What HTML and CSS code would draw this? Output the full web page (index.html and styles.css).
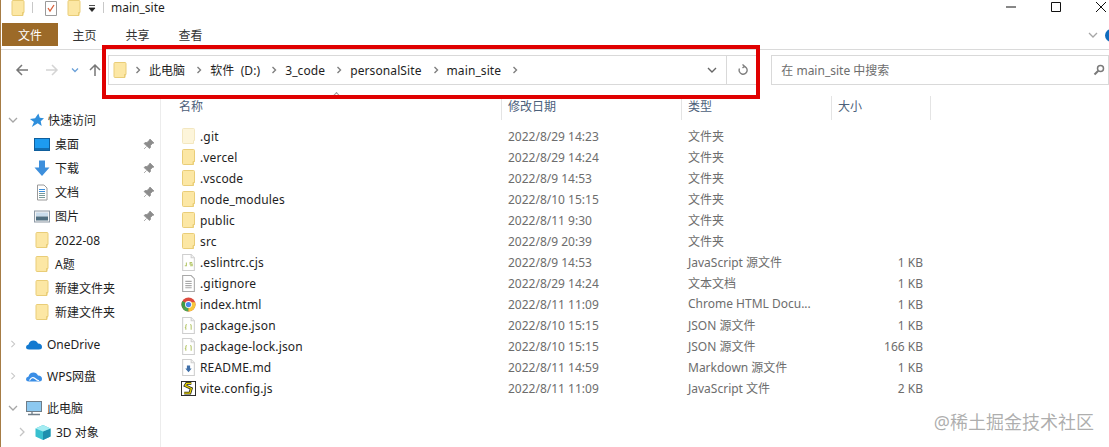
FILE: index.html
```html
<!DOCTYPE html>
<html lang="zh-CN">
<head>
<meta charset="utf-8">
<title>main_site</title>
<link rel="stylesheet" href="styles.css">
</head>
<body>
<svg class="defs" width="0" height="0" aria-hidden="true">
  <symbol id="folder" viewBox="0 0 14 17"><path d="M1 1.5Q1 .5 2 .5H12Q13 .5 13 1.500V12.500H12V15.500H2Q1 15.500 1 14.500Z" fill="#fce7a4" stroke="#e9cd78"/><path d="M11.500 15.500V12.500H13" fill="#f6d877" stroke="#e9cd78"/></symbol>
  <symbol id="folderpale" viewBox="0 0 14 17"><path d="M1 1.500Q1 .5 2 .5H12Q13 .5 13 1.500V12.500H12V15.500H2Q1 15.500 1 14.500Z" fill="#fdf5da" stroke="#f3e7c0"/></symbol>
  <symbol id="pin" viewBox="0 0 12 12"><path d="M7 1l4 4-1.500.5-2 2 0 2-1 1L1 5.500l1-1h2l2-2z M3.500 8.500L1 11" fill="#8c8c8c" stroke="#8c8c8c" stroke-width=".7"/></symbol>
  <symbol id="doc" viewBox="0 0 14 16"><path d="M1.500.5H9.500L12.500 3.500V15.500H1.500Z" fill="#fff" stroke="#cfcfcf"/><path d="M9.500.5V3.500H12.500" fill="#f2f2f2" stroke="#cfcfcf"/></symbol>
  <symbol id="chev-r" viewBox="0 0 8 10"><path d="M2 1l4 4-4 4" fill="none" stroke="#c4c4c4" stroke-width="1.300"/></symbol>
  <symbol id="chev-d" viewBox="0 0 10 8"><path d="M1 2l4 4 4-4" fill="none" stroke="#a6a6a6" stroke-width="1.300"/></symbol>
  <symbol id="crumb" viewBox="0 0 6 8"><path d="M1.500 1l3 3-3 3" fill="none" stroke="#7f7f7f" stroke-width="1.400"/></symbol>
</svg>

<div class="app">
  <header class="titlebar">
    <div class="qat">
      <svg class="qat-folder"><use href="#folder"/></svg>
      <span class="qat-sep"></span>
      <svg class="qat-note" viewBox="0 0 14 17"><path d="M1.500 1.500H12.500V15.500H1.500Z" fill="#fff" stroke="#9a9a9a"/><path d="M4 8l2 3 4-6" fill="none" stroke="#d9603a" stroke-width="1.300"/></svg>
      <svg class="qat-folder"><use href="#folder"/></svg>
      <svg class="qat-arrow" viewBox="0 0 10 10"><path d="M2 2.500H8M2 5H8L5 8.500Z" fill="#222" stroke="#222" stroke-width=".8"/></svg>
      <span class="qat-sep"></span>
      <span class="title-text">main_site</span>
    </div>
    <div class="winctl">
      <svg viewBox="0 0 12 12"><path d="M1 6H11" stroke="#111" fill="none"/></svg>
      <svg viewBox="0 0 12 12"><path d="M1.500 1.500H10.500V10.500H1.500Z" stroke="#111" fill="none"/></svg>
      <svg viewBox="0 0 12 12"><path d="M1 1L11 11M11 1L1 11" stroke="#111" fill="none"/></svg>
    </div>
  </header>

  <nav class="tabs">
    <span class="tab tab-file">文件</span>
    <span class="tab">主页</span>
    <span class="tab">共享</span>
    <span class="tab">查看</span>
    <span class="tabs-end">
      <svg class="ribbon-chev"><use href="#chev-d"/></svg>
      <span class="help"></span>
    </span>
  </nav>

  <section class="addr-row">
    <div class="navs">
      <svg class="nav-back" viewBox="0 0 14 14"><path d="M13 7H2M7 2L2 7l5 5" fill="none" stroke="#777" stroke-width="1.500"/></svg>
      <svg class="nav-fwd" viewBox="0 0 14 14"><path d="M1 7H12M7 2l5 5-5 5" fill="none" stroke="#d4d4d4" stroke-width="1.500"/></svg>
      <svg class="nav-drop" viewBox="0 0 8 6"><path d="M1 1.500l3 3 3-3" fill="none" stroke="#6aa0d8" stroke-width="1.300"/></svg>
      <svg class="nav-up" viewBox="0 0 14 14"><path d="M7 13V2M2 7l5-5 5 5" fill="none" stroke="#777" stroke-width="1.500"/></svg>
    </div>
    <div class="addr-box">
      <svg class="addr-folder"><use href="#folder"/></svg>
      <svg class="crumb"><use href="#crumb"/></svg><span class="crumb-text">此电脑</span>
      <svg class="crumb"><use href="#crumb"/></svg><span class="crumb-text">软件 (D:)</span>
      <svg class="crumb"><use href="#crumb"/></svg><span class="crumb-text">3_code</span>
      <svg class="crumb"><use href="#crumb"/></svg><span class="crumb-text">personalSite</span>
      <svg class="crumb"><use href="#crumb"/></svg><span class="crumb-text">main_site</span>
      <svg class="crumb"><use href="#crumb"/></svg>
      <svg class="addr-drop" viewBox="0 0 10 8"><path d="M1 2l4 4 4-4" fill="none" stroke="#666" stroke-width="1.400"/></svg>
      <span class="addr-refresh">
        <svg viewBox="0 0 12 12"><path d="M6.500 2.200A4 4 0 1 1 2.500 4.500M5.500.5L7.500 2.200 5.500 4" fill="none" stroke="#808080" stroke-width="1.400"/></svg>
      </span>
    </div>
    <div class="search-box">
      <span class="search-text">在 main_site 中搜索</span>
      <svg viewBox="0 0 12 12"><circle cx="7.500" cy="4.500" r="3" fill="none" stroke="#7a7a7a" stroke-width="1.500"/><path d="M5.300 6.700L1.500 10.500" stroke="#7a7a7a" stroke-width="2"/></svg>
    </div>
  </section>

  <main class="body">
    <aside class="sidebar">
      <div class="tree-group">
        <div class="tree-row lvl1"><svg class="tw"><use href="#chev-d"/></svg>
          <svg class="tree-ic star" viewBox="0 0 16 16"><path d="M10 .5l1.500 4.500 4.500.5-3.500 3.300 1 5-4.200-2.800L3 15l2.300-5.500L1 6.500l5.500-1z" fill="#2f8fdc"/></svg><span>快速访问</span></div>
        <div class="tree-row lvl2"><svg class="tree-ic" viewBox="0 0 16 16"><rect x=".5" y="2" width="15" height="12" fill="#1d9bf0" stroke="#0f5e9c"/><path d="M1 12.500H15" stroke="#0f5e9c" stroke-width="1.500"/></svg><span class="grow">桌面</span><svg class="pin"><use href="#pin"/></svg></div>
        <div class="tree-row lvl2"><svg class="tree-ic" viewBox="0 0 16 16"><path d="M5 0H11V7H15.500L8 15.500.5 7H5Z" fill="#3d8fdc"/></svg><span class="grow">下载</span><svg class="pin"><use href="#pin"/></svg></div>
        <div class="tree-row lvl2"><svg class="tree-ic" viewBox="0 0 16 16"><path d="M3.500.5H10L13 3.500V15.500H3.500Z" fill="#fff" stroke="#9a9a9a"/><path d="M5 5H11M5 7H11" stroke="#3d8fdc"/><path d="M5 9H11M5 11H11M5 13H11" stroke="#7a9a9a"/></svg><span class="grow">文档</span><svg class="pin"><use href="#pin"/></svg></div>
        <div class="tree-row lvl2"><svg class="tree-ic" viewBox="0 0 16 16"><rect x=".5" y="2.500" width="15" height="11" fill="#f4f4f4" stroke="#8e9aa6"/><rect x="2" y="4" width="12" height="4" fill="#c9dcec"/><rect x="2" y="8" width="12" height="4" fill="#4f6e80"/></svg><span class="grow">图片</span><svg class="pin"><use href="#pin"/></svg></div>
        <div class="tree-row lvl2"><svg class="tree-ic"><use href="#folder"/></svg><span class="num">2022-08</span></div>
        <div class="tree-row lvl2"><svg class="tree-ic"><use href="#folder"/></svg><span>A题</span></div>
        <div class="tree-row lvl2"><svg class="tree-ic"><use href="#folder"/></svg><span>新建文件夹</span></div>
        <div class="tree-row lvl2"><svg class="tree-ic"><use href="#folder"/></svg><span>新建文件夹</span></div>
      </div>
      <div class="tree-group">
        <div class="tree-row lvl1"><svg class="tw"><use href="#chev-r"/></svg>
          <svg class="tree-ic wide" viewBox="0 0 16 12"><path d="M3 11Q0 11 0 8.500 0 6.500 2.500 6 3.500 2 7.500 2 10.500 2 12 5 16 5 16 8.500 16 11 13 11Z" fill="#1279d0"/></svg><span>OneDrive</span></div>
      </div>
      <div class="tree-group">
        <div class="tree-row lvl1"><svg class="tw"><use href="#chev-r"/></svg>
          <svg class="tree-ic wide" viewBox="0 0 16 12"><path d="M3 11Q0 11 0 8.500 0 6.500 2.500 6 3.500 2 7.500 2 10.500 2 12 5 16 5 16 8.500 16 11 13 11Z" fill="#3a8ee6"/><path d="M3.500 10Q6 5.500 9 8T13 10" fill="none" stroke="#fff" stroke-width="1.100"/></svg><span>WPS网盘</span></div>
      </div>
      <div class="tree-group">
        <div class="tree-row lvl1"><svg class="tw"><use href="#chev-d"/></svg>
          <svg class="tree-ic wide" viewBox="0 0 16 16"><rect x=".5" y="1" width="15" height="10" fill="#8cc8f0" stroke="#6f7d88"/><path d="M6 11.500V13.500M2 14H14" stroke="#6f7d88" stroke-width="1.300"/></svg><span>此电脑</span></div>
        <div class="tree-row lvl2 last"><svg class="tw tw2"><use href="#chev-r"/></svg><svg class="tree-ic" viewBox="0 0 16 16"><path d="M8 .5L15.500 4V12L8 15.500.5 12V4Z" fill="#38c0cf"/><path d="M8 7L15.500 4V12L8 15.500Z" fill="#1e8fae"/><path d="M8 .5L15.500 4 8 7 .5 4Z" fill="#a5ecf2"/></svg><span>3D 对象</span></div>
      </div>
    </aside>

    <section class="files">
      <div class="col-head">
        <span class="sort-caret"></span>
        <span class="hc hc-name">名称</span>
        <span class="hc hc-date">修改日期</span>
        <span class="hc hc-type">类型</span>
        <span class="hc hc-size">大小</span>
      </div>
      <div class="rows">
        <div class="row"><span class="c-name"><svg class="fi"><use href="#folderpale"/></svg>.git</span><span class="c-date">2022/8/29 14:23</span><span class="c-type">文件夹</span><span class="c-size"></span></div>
        <div class="row"><span class="c-name"><svg class="fi"><use href="#folder"/></svg>.vercel</span><span class="c-date">2022/8/29 14:24</span><span class="c-type">文件夹</span><span class="c-size"></span></div>
        <div class="row"><span class="c-name"><svg class="fi"><use href="#folder"/></svg>.vscode</span><span class="c-date">2022/8/9 14:53</span><span class="c-type">文件夹</span><span class="c-size"></span></div>
        <div class="row"><span class="c-name"><svg class="fi"><use href="#folder"/></svg>node_modules</span><span class="c-date">2022/8/10 15:15</span><span class="c-type">文件夹</span><span class="c-size"></span></div>
        <div class="row"><span class="c-name"><svg class="fi"><use href="#folder"/></svg>public</span><span class="c-date">2022/8/11 9:30</span><span class="c-type">文件夹</span><span class="c-size"></span></div>
        <div class="row"><span class="c-name"><svg class="fi"><use href="#folder"/></svg>src</span><span class="c-date">2022/8/9 20:39</span><span class="c-type">文件夹</span><span class="c-size"></span></div>
        <div class="row"><span class="c-name"><svg class="fi" viewBox="0 0 14 16"><use href="#doc"/><path d="M5 8V11H3.500M10.500 8H8.500V9.500H10.500V11H8.500" fill="none" stroke="#b5c76a"/></svg>.eslintrc.cjs</span><span class="c-date">2022/8/9 14:53</span><span class="c-type">JavaScript 源文件</span><span class="c-size">1 KB</span></div>
        <div class="row"><span class="c-name"><svg class="fi" viewBox="0 0 14 16"><path d="M1.500.5H9.500L12.500 3.500V15.500H1.500Z" fill="#fff" stroke="#a8a8a8"/><path d="M4 6H10M4 8H10M4 10H10M4 12H10" stroke="#a8a8a8"/></svg>.gitignore</span><span class="c-date">2022/8/29 14:24</span><span class="c-type">文本文档</span><span class="c-size">1 KB</span></div>
        <div class="row"><span class="c-name"><svg class="fi" viewBox="0 0 16 16"><circle cx="8" cy="8" r="7.500" fill="#dd4b3e"/><path d="M8 8L1.500 11.700A7.500 7.500 0 0 0 8 15.500Z" fill="#4aa54f"/><path d="M8 8V15.500A7.500 7.500 0 0 0 15 5.500H8Z" fill="#f6c73b"/><path d="M8 8L1.500 11.700A7.500 7.500 0 0 1 1.500 4.300Z" fill="#3f9c46"/><circle cx="8" cy="8" r="3.700" fill="#fff"/><circle cx="8" cy="8" r="2.800" fill="#4a85e8"/></svg>index.html</span><span class="c-date">2022/8/11 11:09</span><span class="c-type">Chrome HTML Docu...</span><span class="c-size">1 KB</span></div>
        <div class="row"><span class="c-name"><svg class="fi" viewBox="0 0 14 16"><use href="#doc"/><path d="M5.500 7Q4.500 7 4.500 8V9.500L4 10 4.500 10.500V12M8.500 7Q9.500 7 9.500 8V12" fill="none" stroke="#b5c76a"/></svg>package.json</span><span class="c-date">2022/8/10 15:15</span><span class="c-type">JSON 源文件</span><span class="c-size">1 KB</span></div>
        <div class="row"><span class="c-name"><svg class="fi" viewBox="0 0 14 16"><use href="#doc"/><path d="M5.500 7Q4.500 7 4.500 8V9.500L4 10 4.500 10.500V12M8.500 7Q9.500 7 9.500 8V12" fill="none" stroke="#b5c76a"/></svg>package-lock.json</span><span class="c-date">2022/8/10 15:15</span><span class="c-type">JSON 源文件</span><span class="c-size">166 KB</span></div>
        <div class="row"><span class="c-name"><svg class="fi" viewBox="0 0 14 16"><use href="#doc"/><path d="M5.500 6H8.500V9H10L7 12.500 4 9H5.500Z" fill="#3f6fa8"/></svg>README.md</span><span class="c-date">2022/8/11 14:59</span><span class="c-type">Markdown 源文件</span><span class="c-size">1 KB</span></div>
        <div class="row"><span class="c-name"><svg class="fi" viewBox="0 0 16 16"><rect x=".5" y=".5" width="15" height="15" fill="#fff" stroke="#222"/><path d="M11 2.500H6L4.500 5 11 8 9.500 13H3.500" fill="none" stroke="#222" stroke-width="3"/><path d="M11 2.500H6L4.500 5 11 8 9.500 13H3.500" fill="none" stroke="#e8d400" stroke-width="1.400"/></svg>vite.config.js</span><span class="c-date">2022/8/11 11:09</span><span class="c-type">JavaScript 文件</span><span class="c-size">2 KB</span></div>
      </div>
    </section>
  </main>

  <div class="highlight"></div>
  <div class="watermark">@稀土掘金技术社区</div>
</div>
</body>
</html>
```

FILE: styles.css
```css
* { box-sizing: border-box; }
html, body { margin: 0; padding: 0; }
body {
  width: 1109px;
  height: 447px;
  overflow: hidden;
  background: #fff;
  font-family: "Noto Sans", "Noto Sans CJK SC", sans-serif;
  font-size: 12px;
  color: #1e1e1e;
}
.defs { position: absolute; }
svg { display: block; flex: none; }

.app {
  position: relative;
  width: 1109px;
  height: 447px;
  overflow: hidden;
  border-left: 1px solid #a67c45;
  display: flex;
  flex-direction: column;
}

/* title bar */
.titlebar {
  height: 23px;
  display: flex;
  justify-content: space-between;
  padding-left: 10px;
  flex: none;
}
.qat { display: flex; align-items: flex-start; }
.qat-folder { width: 14px; height: 17px; }
.qat-sep { width: 1px; height: 11px; margin: 2px 11px 0 7px; background: #c8c8c8; }
.qat-note { width: 14px; height: 17px; margin-right: 9px; }
.qat-arrow { width: 10px; height: 10px; margin: 3px 0 0 6px; }
.qat .qat-arrow + .qat-sep { margin: 2px 7px 0 6px; }
.title-text { font-size: 12px; line-height: 15px; }
.winctl { display: flex; gap: 33px; padding: 1px 2px 0 0; }
.winctl svg { width: 12px; height: 12px; }

/* tabs */
.tabs {
  height: 27px;
  display: flex;
  align-items: flex-start;
  border-bottom: 1px solid #dadada;
  padding-left: 1px;
  flex: none;
}
.tab { width: 53px; height: 23px; line-height: 25px; text-align: center; color: #333; }
.tab-file { width: 56px; background: #9c6a28; color: #fff; }
.tabs-end { margin-left: auto; display: flex; align-items: center; gap: 7px; height: 23px; margin-right: -9px; padding-top: 1px; }
.ribbon-chev { width: 10px; height: 8px; }
.help { width: 13px; height: 13px; border-radius: 50%; background: #0f6cbd; }

/* address row */
.addr-row {
  height: 46px;
  display: flex;
  align-items: flex-start;
  padding-top: 5px;
  flex: none;
}
.navs { width: 107px; height: 30px; display: flex; align-items: center; padding-left: 14px; }
.nav-back, .nav-fwd, .nav-up { width: 14px; height: 14px; }
.nav-fwd { margin-left: 16px; }
.nav-drop { width: 8px; height: 6px; margin-left: 12px; }
.nav-up { margin-left: 9px; }

.addr-box {
  width: 652px;
  height: 30px;
  border: 1px solid #d9d9d9;
  display: flex;
  align-items: center;
  padding-left: 4px;
}
.addr-folder { width: 14px; height: 17px; }
.crumb { width: 6px; height: 8px; margin: 0 8px 0 11px; }
.addr-folder + .crumb { margin-left: 8px; }
.crumb-text { letter-spacing: .1px; word-spacing: 3px; }
.addr-drop { width: 10px; height: 8px; margin-left: auto; margin-right: 9px; }
.addr-refresh { width: 32px; height: 28px; border-left: 1px solid #d9d9d9; display: flex; align-items: center; justify-content: center; }
.addr-refresh svg { width: 12px; height: 12px; }

.search-box {
  width: 338px;
  height: 30px;
  margin-left: 12px;
  border: 1px solid #d9d9d9;
  display: flex;
  align-items: center;
  justify-content: space-between;
  padding: 0 3px 0 9px;
  color: #6d6d6d;
}
.search-box svg { width: 12px; height: 12px; }

/* body */
.body { flex: 1; display: flex; min-height: 0; }

.sidebar {
  width: 160px;
  flex: none;
  border-right: 1px solid #ececec;
  padding-top: 12px;
  display: flex;
  flex-direction: column;
  gap: 8px;
}
.tree-row {
  position: relative;
  height: 24px;
  display: flex;
  align-items: center;
  color: #1e1e1e;
}
.lvl1 { padding-left: 7px; }
.lvl2 { padding-left: 33px; }
.tw { width: 10px; height: 8px; margin-right: 8px; }
.tw2 { width: 8px; height: 10px; margin: 0 9px 0 -16px; }
.tree-ic { width: 16px; height: 17px; margin-right: 5px; }
.tree-ic.wide { margin-right: 5px; }
.star { margin: 0 4px 0 3px; width: 15px; }
.grow { flex: 1; }
.pin { width: 12px; height: 12px; margin-right: 5px; }

/* files */
.files { flex: 1; min-width: 0; }
.col-head {
  position: relative;
  height: 24px;
  display: grid;
  grid-template-columns: 322px 180px 150px 100px;
  padding-left: 18px;
  color: #4c607a;
}
.hc { height: 24px; line-height: 22px; padding-left: 6px; border-left: 1px solid #e4e4e4; }
.hc-name { padding-left: 0; border-left: 0; }
.hc-size { border-right: 1px solid #e4e4e4; }
.sort-caret {
  position: absolute;
  left: 173px;
  top: -3px;
  width: 5px;
  height: 5px;
  border-left: 1px solid #9a9a9a;
  border-top: 1px solid #9a9a9a;
  transform: rotate(45deg);
}
.rows { padding-top: 6px; }
.row {
  height: 21px;
  display: grid;
  grid-template-columns: 322px 180px 150px 92px;
  padding-left: 18px;
  align-items: center;
  color: #6d6d6d;
}
.c-name { display: flex; align-items: center; color: #1e1e1e; letter-spacing: .15px; }
.fi { width: 15px; height: 17px; margin: 0 4px 0 2px; }
.c-date, .c-type { padding-left: 7px; white-space: nowrap; }
.c-type { padding-bottom: 2px; }
.c-size { text-align: right; }

/* overlays */
.highlight {
  position: absolute;
  left: 101px;
  top: 45px;
  width: 658px;
  height: 54px;
  border: 4px solid #e00000;
  pointer-events: none;
}
.watermark {
  position: absolute;
  right: 15px;
  bottom: 13px;
  font-size: 18px;
  line-height: 24px;
  color: rgba(120, 120, 120, .6);
  white-space: nowrap;
}
```
